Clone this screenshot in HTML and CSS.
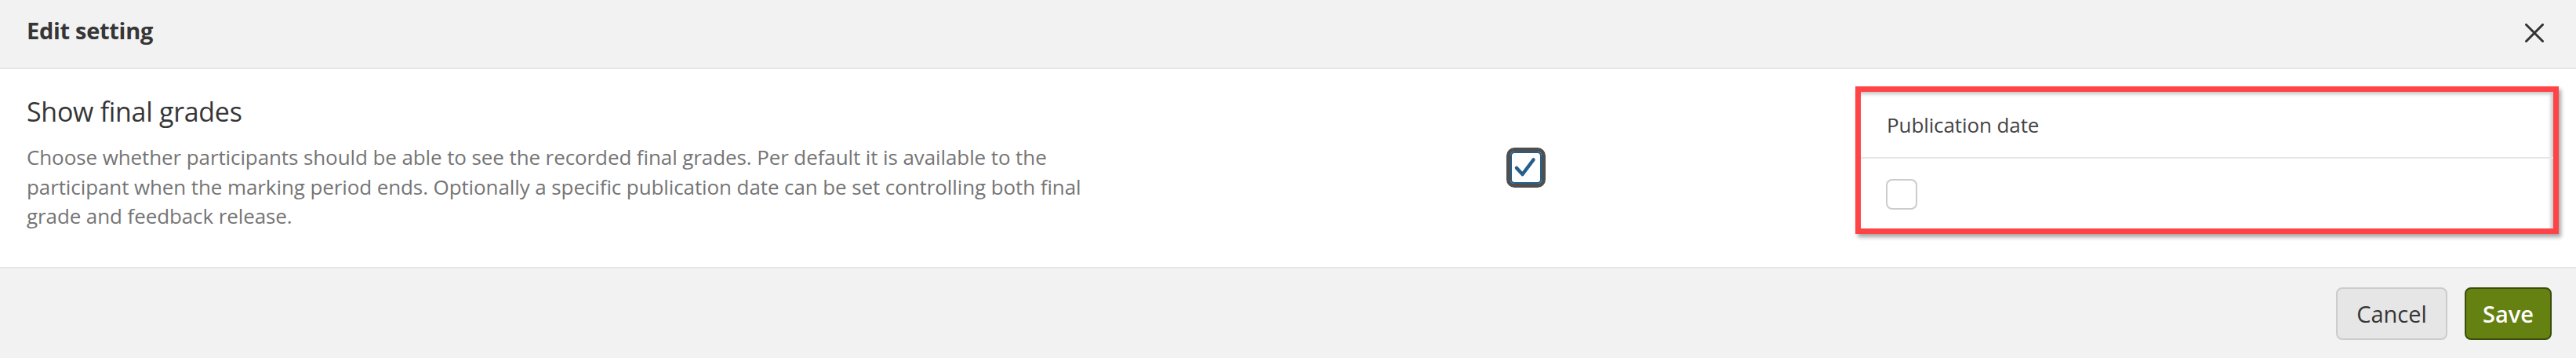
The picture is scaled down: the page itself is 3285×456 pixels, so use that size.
FILE: index.html
```html
<!DOCTYPE html>
<html lang="en">
<head>
<meta charset="utf-8">
<title>Edit setting</title>
<link rel="stylesheet" href="styles.css">
</head>
<body>
<div class="dialog">
  <header class="dlg-header">
    <h1 class="dlg-title">Edit setting</h1>
    <button class="close-btn" aria-label="Close">
      <svg width="24" height="24" viewBox="0 0 24 24"><path d="M1.5 1.5 L22.5 22.5 M22.5 1.5 L1.5 22.5" stroke="#333" stroke-width="3" fill="none" stroke-linecap="square"/></svg>
    </button>
  </header>
  <main class="dlg-body">
    <div class="setting-text">
      <h2 class="setting-title">Show final grades</h2>
      <p class="setting-desc">Choose whether participants should be able to see the recorded final grades. Per default it is available to the participant when the marking period ends. Optionally a specific publication date can be set controlling both final grade and feedback release.</p>
    </div>
    <div class="setting-control">
      <svg class="check-big" width="50" height="51" viewBox="0 0 50 51">
        <rect x="2.5" y="2.5" width="45" height="46" rx="8" ry="8" fill="#ffffff" stroke="#4f4f4f" stroke-width="5"/>
        <rect x="6" y="6" width="38" height="39" rx="4.5" ry="4.5" fill="#ffffff" stroke="#245f8c" stroke-width="2"/>
        <path d="M13 26 L20.5 34 L34.5 15.5" stroke="#245f8c" stroke-width="4.5" fill="none" stroke-linecap="round" stroke-linejoin="round"/>
      </svg>
    </div>
    <section class="pub-panel">
      <div class="pub-head">Publication date</div>
      <div class="pub-row"><span class="check-empty"></span></div>
    </section>
  </main>
  <footer class="dlg-footer">
    <button class="btn btn-cancel">Cancel</button>
    <button class="btn btn-save">Save</button>
  </footer>
</div>
</body>
</html>
```
FILE: styles.css
```css
* { box-sizing: border-box; }
html, body { margin: 0; padding: 0; background: #ffffff; }
body { font-family: "Open Sans", "Noto Sans", sans-serif; color: #333333; }

.dialog { width: 3285px; height: 456px; display: flex; flex-direction: column; background: #ffffff; }

.dlg-header {
  height: 88px;
  background: #f2f2f2;
  border-bottom: 2px solid #e6e6e6;
  display: flex;
  align-items: center;
  justify-content: space-between;
  padding: 0 41px 2px 34px;
}
.dlg-title { margin: 0 0 6px 0; font-size: 29px; font-weight: 700; color: #363636; letter-spacing: -0.3px; line-height: 40px; }
.close-btn { border: 0; background: none; padding: 0; width: 24px; height: 24px; display: flex; }

.dlg-body {
  height: 252px;
  display: grid;
  grid-template-columns: 1372px 1fr 897px;
  align-items: start;
  padding: 22px 22px 0 34px;
}
.setting-text { margin-top: 12px; }
.setting-title { margin: 0 0 20px 0; font-size: 34px; font-weight: 400; line-height: 40px; color: #363636; letter-spacing: -0.3px; }
.setting-desc { margin: 0; font-size: 26px; line-height: 37.5px; color: #757575; letter-spacing: -0.1px; max-width: 1372px; }

.setting-control { justify-self: start; margin-left: 515px; margin-top: 78px; }
.check-big { display: block; }

.pub-panel {
  height: 188px;
  border: 7px solid #ff4448;
  background: #ffffff;
  box-shadow: 3px 4px 5px rgba(0, 0, 0, 0.35), inset -4px 4px 4px -1px rgba(0, 0, 0, 0.22);
  display: flex;
  flex-direction: column;
}
.pub-head {
  height: 85px;
  display: flex;
  align-items: center;
  padding: 0 0 0 33px;
  font-size: 26px;
  color: #444444;
  border-bottom: 2px solid #e6e6e6;
  letter-spacing: -0.1px;
}
.pub-row { flex: 1; display: flex; align-items: center; padding: 2px 0 0 32px; }
.check-empty { width: 40px; height: 39px; border: 2px solid #cccccc; border-radius: 8px; background: #ffffff; }

.dlg-footer {
  flex: 1;
  background: #f2f2f2;
  border-top: 2px solid #e6e6e6;
  display: flex;
  justify-content: flex-end;
  align-items: flex-start;
  gap: 22px;
  padding: 24px 31px 0 0;
}
.btn { height: 67px; border-radius: 8px; font-family: "Open Sans", "Noto Sans", sans-serif; font-size: 29px; padding: 0; display: flex; align-items: center; justify-content: center; }
.btn-cancel { width: 142px; background: #e6e6e6; border: 2px solid #cccccc; color: #363636; }
.btn-save { width: 111px; background: #648112; border: 2px solid #3b4d0a; color: #ffffff; font-weight: 600; }
```
